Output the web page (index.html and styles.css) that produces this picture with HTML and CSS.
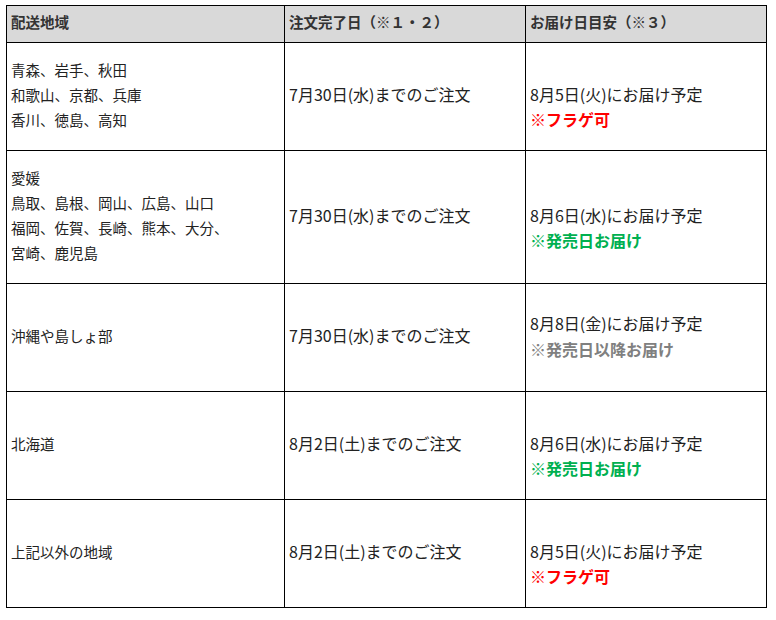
FILE: index.html
```html
<!DOCTYPE html>
<html lang="ja">
<head>
<meta charset="utf-8">
<link rel="stylesheet" href="styles.css">
</head>
<body>
<table class="ship">
  <colgroup>
    <col class="c1"><col class="c2"><col class="c3">
  </colgroup>
  <thead>
    <tr class="head">
      <th>配送地域</th>
      <th>注文完了日（※１・２）</th>
      <th>お届け日目安（※３）</th>
    </tr>
  </thead>
  <tbody>
    <tr class="r108">
      <td class="area">青森、岩手、秋田<br>和歌山、京都、兵庫<br>香川、徳島、高知</td>
      <td class="date">7月30日(水)までのご注文</td>
      <td class="date"><div class="shift">8月5日(火)にお届け予定<br><span class="red">※フラゲ可</span></div></td>
    </tr>
    <tr class="r133">
      <td class="area">愛媛<br>鳥取、島根、岡山、広島、山口<br>福岡、佐賀、長崎、熊本、大分、<br>宮崎、鹿児島</td>
      <td class="date">7月30日(水)までのご注文</td>
      <td class="date"><div class="shift">8月6日(水)にお届け予定<br><span class="green">※発売日お届け</span></div></td>
    </tr>
    <tr class="r108">
      <td class="area">沖縄や島しょ部</td>
      <td class="date">7月30日(水)までのご注文</td>
      <td class="date"><div class="mid">8月8日(金)にお届け予定<br><span class="gray">※発売日以降お届け</span></div></td>
    </tr>
    <tr class="r108">
      <td class="area">北海道</td>
      <td class="date">8月2日(土)までのご注文</td>
      <td class="date"><div class="shift">8月6日(水)にお届け予定<br><span class="green">※発売日お届け</span></div></td>
    </tr>
    <tr class="r108">
      <td class="area">上記以外の地域</td>
      <td class="date">8月2日(土)までのご注文</td>
      <td class="date"><div class="shift">8月5日(火)にお届け予定<br><span class="red">※フラゲ可</span></div></td>
    </tr>
  </tbody>
</table>
</body>
</html>
```

FILE: styles.css
```css
html, body {
  margin: 0;
  padding: 0;
  background: #ffffff;
}
body {
  padding: 5px 0 0 6px;
  font-family: "Noto Sans CJK JP", "Noto Sans", sans-serif;
  color: #222222;
}
.ship {
  border-collapse: collapse;
  table-layout: fixed;
  width: 760px;
}
.c1 { width: 278px; }
.c2 { width: 241px; }
.c3 { width: 241px; }
.ship th,
.ship td {
  border: 1px solid #000000;
  padding: 0 4px 4px 4px;
  vertical-align: middle;
  text-align: left;
}
.head {
  height: 37px;
  background: #d9d9d9;
}
.head th {
  font-size: 14.5px;
  font-weight: bold;
  color: #333333;
  line-height: 20px;
}
.r108 { height: 108px; }
.r133 { height: 133px; }
.area {
  font-size: 14.5px;
  line-height: 25px;
}
.date {
  font-size: 16px;
  line-height: 25px;
}
.shift {
  padding-top: 25px;
}
.mid {
  line-height: 26px;
}
.red, .green, .gray {
  font-weight: bold;
}
.red { color: #ff0000; }
.green { color: #00b050; }
.gray { color: #808080; }
```
